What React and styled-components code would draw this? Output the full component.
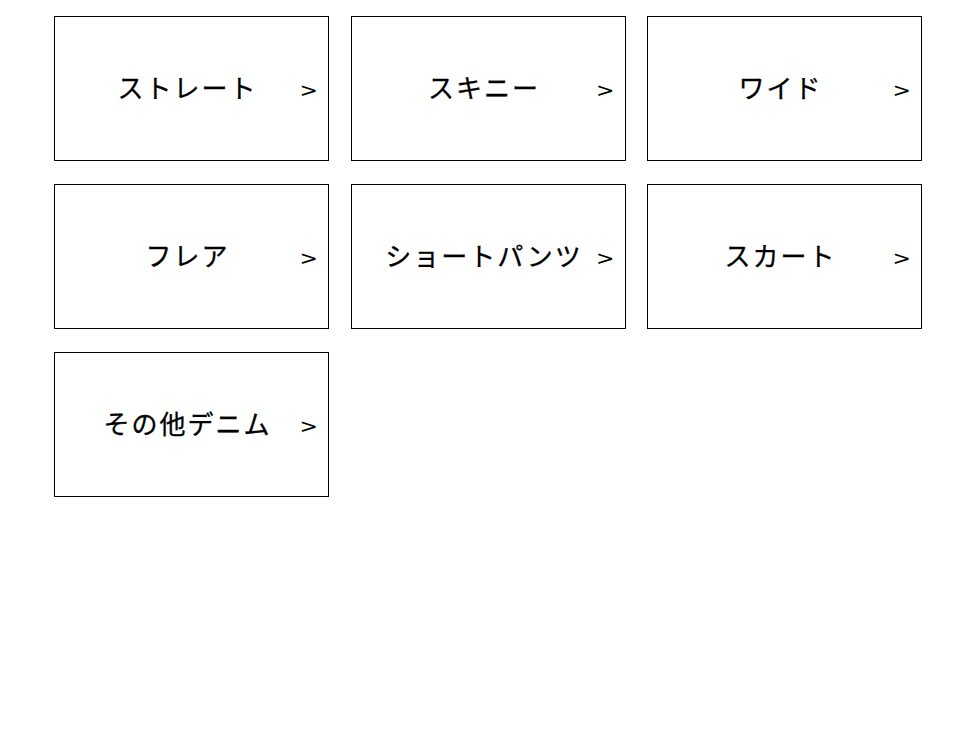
import React from 'react';
import styled, { createGlobalStyle } from 'styled-components';

const GlobalStyle = createGlobalStyle`
  html, body {
    margin: 0;
    padding: 0;
    background: #fff;
  }
  body {
    font-family: "Noto Sans CJK JP", "Liberation Sans", sans-serif;
    color: #000;
  }
`;

const categories = [
  'ストレート',
  'スキニー',
  'ワイド',
  'フレア',
  'ショートパンツ',
  'スカート',
  'その他デニム',
];

const Grid = styled.div`
  display: grid;
  grid-template-columns: repeat(3, 275px);
  column-gap: 21.5px;
  row-gap: 23px;
  padding: 16px 0 0 54px;
`;

const Card = styled.a`
  position: relative;
  box-sizing: border-box;
  width: 275px;
  height: 145px;
  border: 1px solid #000;
  display: flex;
  align-items: center;
  justify-content: center;
  text-decoration: none;
  color: #000;
  cursor: pointer;
`;

const Label = styled.span`
  font-family: "Noto Sans CJK JP", sans-serif;
  font-size: 26px;
  font-weight: 400;
  letter-spacing: 2px;
  margin-top: -5px;
  margin-right: 8px;
  -webkit-text-stroke: 0.3px #000;
`;

const Arrow = styled.span`
  position: absolute;
  right: 10px;
  top: 50%;
  transform: translateY(-40%) scaleY(0.85);
  font-family: "DejaVu Sans", sans-serif;
  font-weight: 400;
  font-size: 22px;
  line-height: 1;
`;

export default function App() {
  return (
    <>
      <GlobalStyle />
      <Grid>
        {categories.map((name) => (
          <Card key={name}>
            <Label>{name}</Label>
            <Arrow>&gt;</Arrow>
          </Card>
        ))}
      </Grid>
    </>
  );
}
